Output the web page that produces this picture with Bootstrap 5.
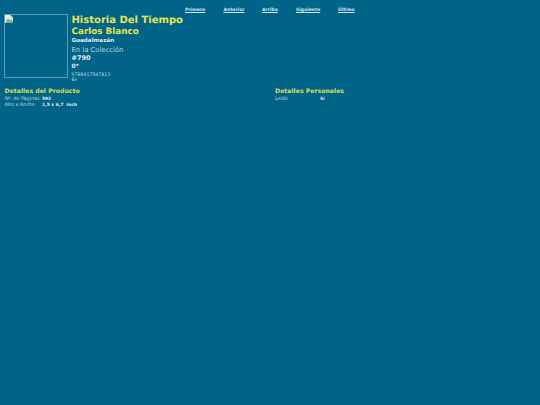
<!DOCTYPE html>
<html lang="es">
<head>
<meta charset="utf-8">
<title>Historia Del Tiempo</title>
<link href="https://cdn.jsdelivr.net/npm/bootstrap@5.3.0/dist/css/bootstrap.min.css" rel="stylesheet">
<style>
html, body { height: 100%; }
body { background: #006489; color: #bcd9e6; font-family: "DejaVu Sans", sans-serif; font-size: 5px; line-height: 1.2; text-rendering: geometricPrecision; }
.top-nav { padding-top: 7px; padding-left: 185px; height: 14px; }
.top-nav a { color: #d5e6ee; font-weight: 700; font-size: 4.5px; line-height: 6px; text-decoration: underline; white-space: nowrap; }
.nav-a { width: 38.5px; } .nav-b { width: 38.5px; } .nav-c { width: 34px; } .nav-d { width: 42px; } .nav-e { width: 20px; }
.cover { width: 64px; height: 64px; margin-left: 4px; border: 1px solid #5f9db7; flex: none; }
.broken { display: block; width: 8px; height: 8px; }
.info { margin-left: 3.5px; padding-top: 1px; }
.book-title { color: #e8e450; font-size: 10px; font-weight: 700; line-height: 12px; margin: 0; }
.book-author { color: #e8e450; font-size: 8.8px; font-weight: 700; line-height: 11px; margin: 0; }
.publisher { color: #e0ecf2; font-size: 5.6px; font-weight: 700; line-height: 6px; }
.collection { font-size: 6.8px; line-height: 8px; margin-top: 2px; }
.number { color: #e0ecf2; font-size: 6.5px; font-weight: 700; line-height: 8px; }
.rating { color: #e0ecf2; font-size: 6px; font-weight: 700; line-height: 8px; margin-top: 1px; }
.isbn { font-size: 4.7px; line-height: 5.5px; }
.isbn-first { margin-top: 1.5px; }
.details { margin-top: 4px; padding-left: 4.5px; }
.col-left { width: 270.5px; }
.sec-title { color: #d8dc5c; font-size: 6.2px; font-weight: 700; line-height: 8px; margin: 0 0 1.5px; }
.kv { line-height: 6px; font-size: 4.8px; }
.kv-l { width: 37.5px; }
.kv-r { color: #e0ecf2; font-weight: 700; font-size: 4.4px; white-space: pre; }
.kv-wide { width: 45px; }
</style>
</head>
<body>
<nav class="d-flex top-nav">
  <div class="nav-a"><a href="#">Primero</a></div>
  <div class="nav-b"><a href="#">Anterior</a></div>
  <div class="nav-c"><a href="#">Arriba</a></div>
  <div class="nav-d"><a href="#">Siguiente</a></div>
  <div class="nav-e"><a href="#">Último</a></div>
</nav>
<main class="d-flex">
  <div class="cover">
    <svg class="broken" viewBox="0 0 8 8" role="img" aria-label="Portada">
      <path d="M0 0h5.5L8 2.5V8H0z" fill="#e8efe9"/>
      <path d="M1 6l2-2.5L5 5l1-1 2 2.5V8H1z" fill="#7fb089"/>
      <path d="M5.5 0v2.5H8z" fill="#b9c6c9"/>
    </svg>
  </div>
  <div class="info">
    <h1 class="book-title">Historia Del Tiempo</h1>
    <h2 class="book-author">Carlos Blanco</h2>
    <div class="publisher">Guadalmazán</div>
    <div class="collection">En la Colección</div>
    <div class="number">#790</div>
    <div class="rating">0*</div>
    <div class="isbn isbn-first">9788417547813</div>
    <div class="isbn">Es</div>
  </div>
</main>
<section class="d-flex details">
  <div class="col-left">
    <h3 class="sec-title">Detalles del Producto</h3>
    <div class="d-flex kv"><span class="kv-l">Nº. de Páginas</span><span class="kv-r">592</span></div>
    <div class="d-flex kv"><span class="kv-l">Alto x Ancho</span><span class="kv-r">1,5 x 6,7  inch</span></div>
  </div>
  <div>
    <h3 class="sec-title">Detalles Personales</h3>
    <div class="d-flex kv"><span class="kv-wide">Leído</span><span class="kv-r">Si</span></div>
  </div>
</section>
<script src="https://cdn.jsdelivr.net/npm/bootstrap@5.3.0/dist/js/bootstrap.bundle.min.js"></script>
</body>
</html>
